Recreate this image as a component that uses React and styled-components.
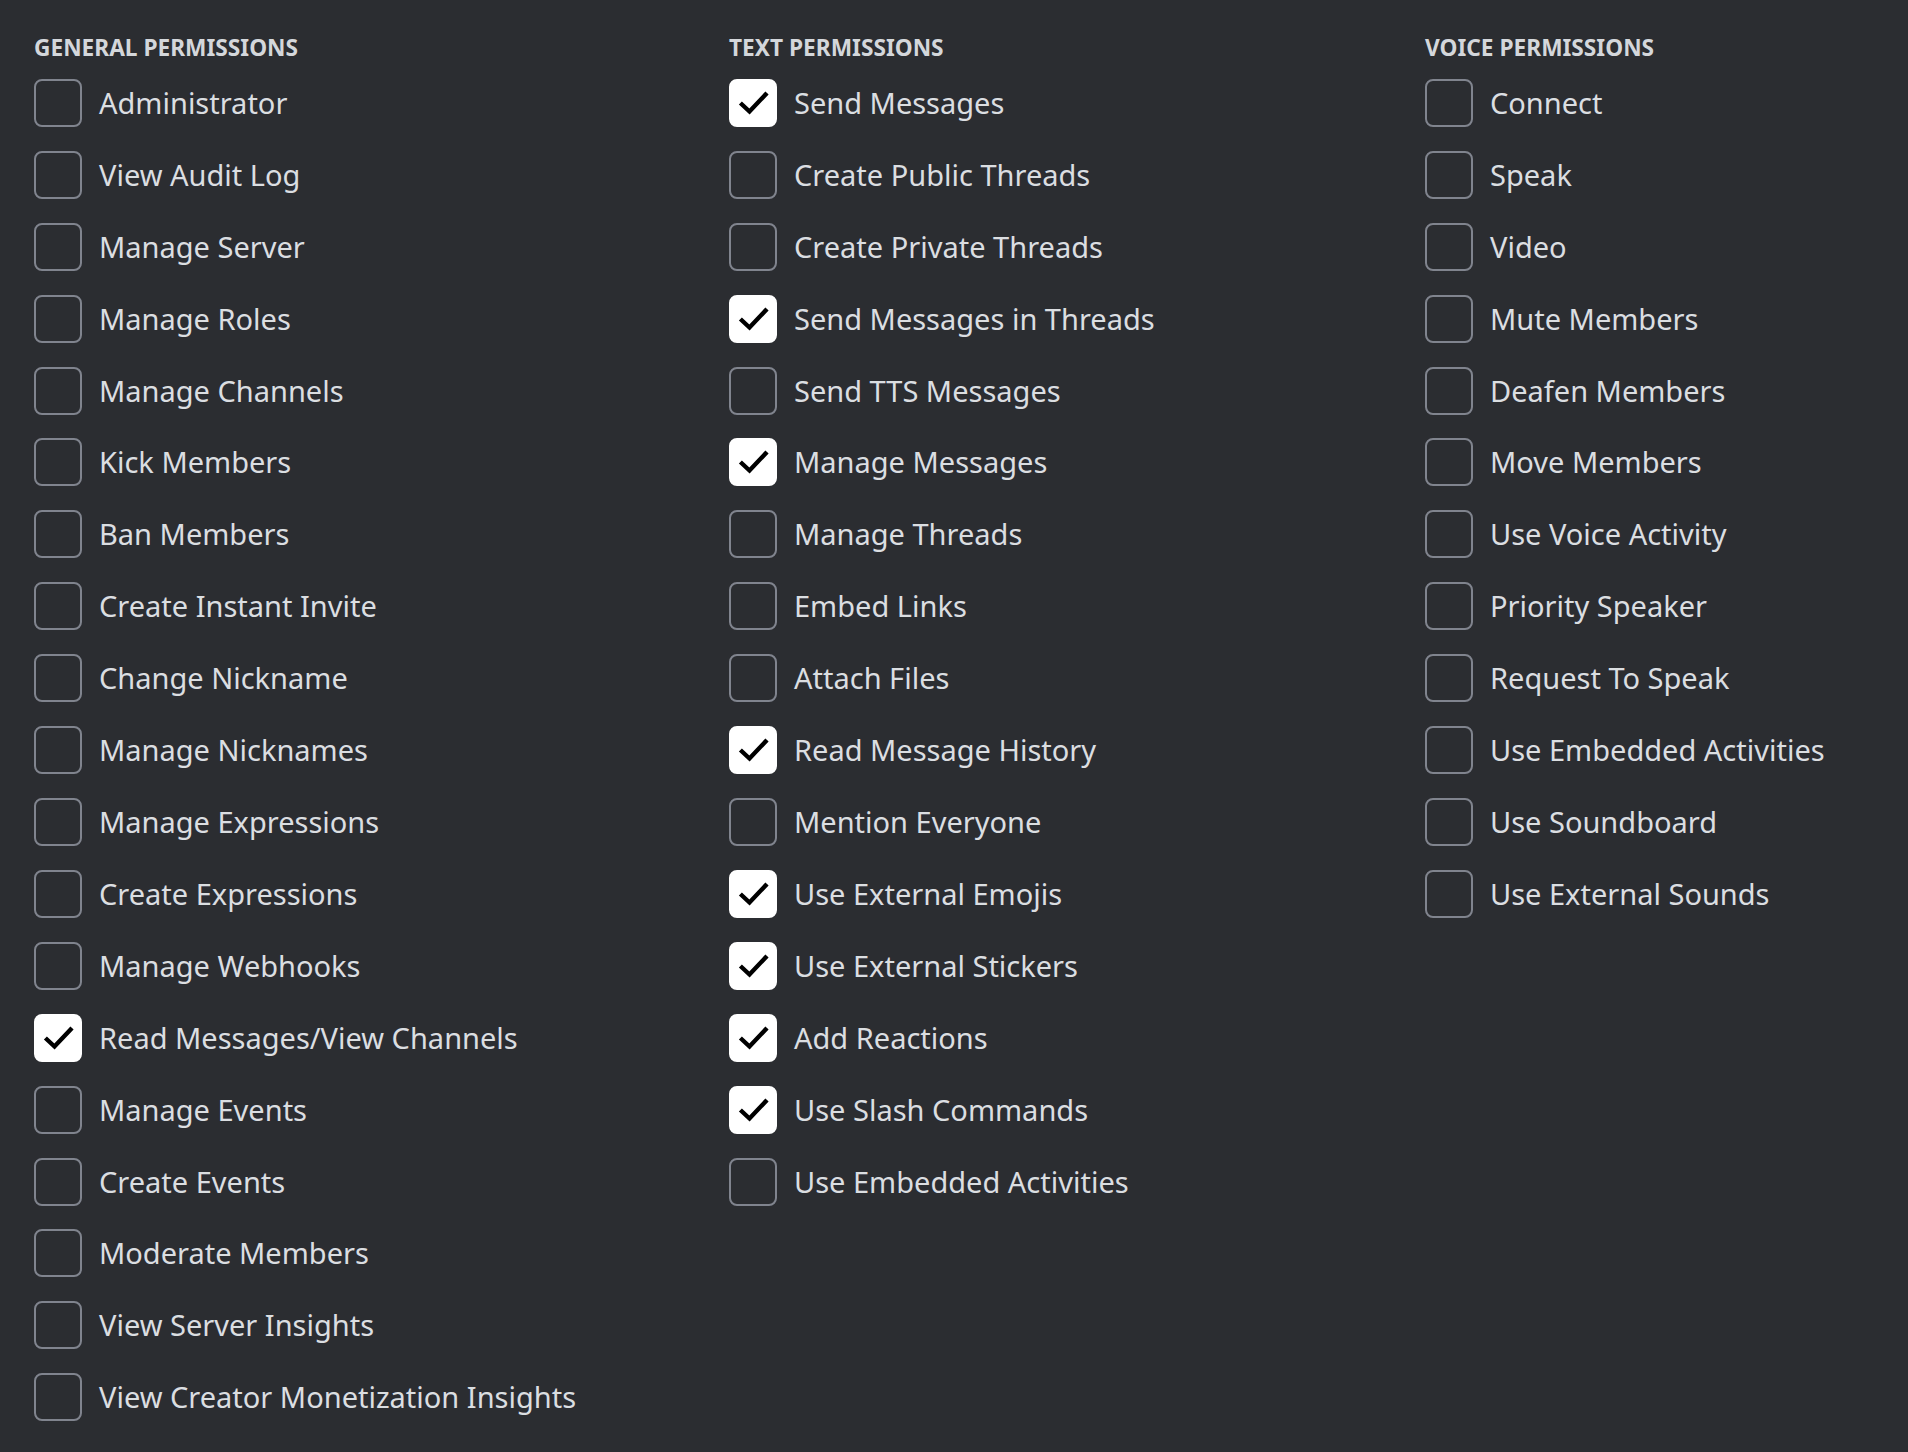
import React from 'react';
import styled, { createGlobalStyle } from 'styled-components';

const GlobalStyle = createGlobalStyle`
  html, body {
    margin: 0;
    padding: 0;
    background: #2b2d31;
    overflow: hidden;
  }
`;

const sections = [
  {
    title: 'General Permissions',
    items: [
      ['Administrator'],
      ['View Audit Log'],
      ['Manage Server'],
      ['Manage Roles'],
      ['Manage Channels'],
      ['Kick Members'],
      ['Ban Members'],
      ['Create Instant Invite'],
      ['Change Nickname'],
      ['Manage Nicknames'],
      ['Manage Expressions'],
      ['Create Expressions'],
      ['Manage Webhooks'],
      ['Read Messages/View Channels', true],
      ['Manage Events'],
      ['Create Events'],
      ['Moderate Members'],
      ['View Server Insights'],
      ['View Creator Monetization Insights'],
    ],
  },
  {
    title: 'Text Permissions',
    items: [
      ['Send Messages', true],
      ['Create Public Threads'],
      ['Create Private Threads'],
      ['Send Messages in Threads', true],
      ['Send TTS Messages'],
      ['Manage Messages', true],
      ['Manage Threads'],
      ['Embed Links'],
      ['Attach Files'],
      ['Read Message History', true],
      ['Mention Everyone'],
      ['Use External Emojis', true],
      ['Use External Stickers', true],
      ['Add Reactions', true],
      ['Use Slash Commands', true],
      ['Use Embedded Activities'],
    ],
  },
  {
    title: 'Voice Permissions',
    items: [
      ['Connect'],
      ['Speak'],
      ['Video'],
      ['Mute Members'],
      ['Deafen Members'],
      ['Move Members'],
      ['Use Voice Activity'],
      ['Priority Speaker'],
      ['Request To Speak'],
      ['Use Embedded Activities'],
      ['Use Soundboard'],
      ['Use External Sounds'],
    ],
  },
];

export default function App() {
  return (
    <>
      <GlobalStyle />
      <Page>
        {sections.map(({ title, items }) => (
          <Column key={title}>
            <Heading>{title}</Heading>
            {items.map(([label, checked]) => (
              <Row key={label}>
                <Box checked={!!checked}>
                  {checked && (
                    <svg width="48" height="48" viewBox="0 0 48 48" fill="none">
                      <path d="M13 25.5 L20.5 32.5 L36.5 15.5" stroke="#000" strokeWidth="4.4" strokeLinecap="square" />
                    </svg>
                  )}
                </Box>
                <Label>{label}</Label>
              </Row>
            ))}
          </Column>
        ))}
      </Page>
    </>
  );
}

const Page = styled.div`
  min-height: 100vh;
  box-sizing: border-box;
  padding: 33px 0 0 34px;
  display: grid;
  grid-template-columns: 695px 696px 1fr;
  align-items: start;
  background: #2b2d31;
  font-family: "Noto Sans", sans-serif;
`;

const Column = styled.div`
  display: flex;
  flex-direction: column;
`;

const Heading = styled.h2`
  margin: 1px 0 5px 0;
  font-size: 22.7px;
  line-height: 28px;
  font-weight: 700;
  text-transform: uppercase;
  color: #d4d7db;
`;

const Row = styled.div`
  display: flex;
  align-items: center;
  gap: 17px;
  padding: 11.96px 0;
`;

const Box = styled.div`
  box-sizing: border-box;
  width: 48px;
  height: 48px;
  flex: none;
  border-radius: 8px;
  border: 2px solid ${({ checked }) => (checked ? '#ffffff' : '#80848e')};
  background: ${({ checked }) => (checked ? '#ffffff' : 'transparent')};
  display: flex;
  align-items: center;
  justify-content: center;
  svg {
    display: block;
    margin: -2px;
  }
`;

const Label = styled.span`
  font-size: 29px;
  line-height: 36px;
  color: #dbdee1;
  white-space: nowrap;
`;
